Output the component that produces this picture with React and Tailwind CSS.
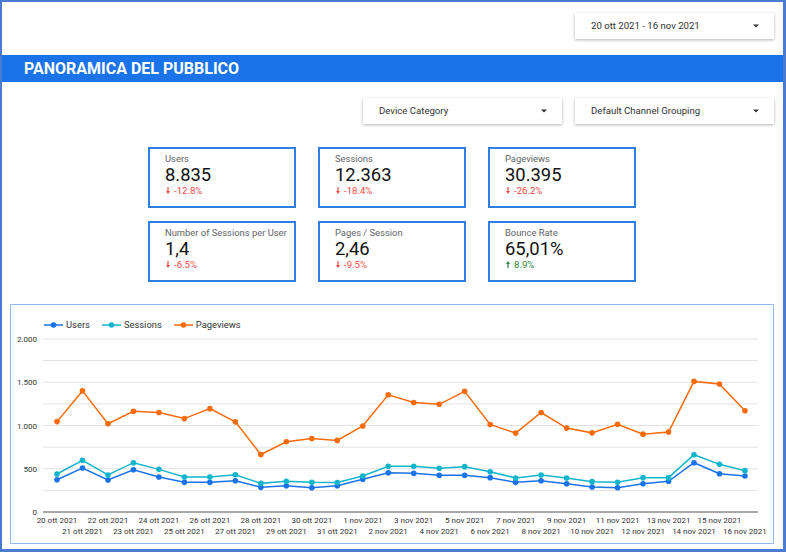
import React from 'react';

const days = [
  '20 ott 2021', '21 ott 2021', '22 ott 2021', '23 ott 2021', '24 ott 2021', '25 ott 2021', '26 ott 2021',
  '27 ott 2021', '28 ott 2021', '29 ott 2021', '30 ott 2021', '31 ott 2021', '1 nov 2021', '2 nov 2021',
  '3 nov 2021', '4 nov 2021', '5 nov 2021', '6 nov 2021', '7 nov 2021', '8 nov 2021', '9 nov 2021',
  '10 nov 2021', '11 nov 2021', '12 nov 2021', '13 nov 2021', '14 nov 2021', '15 nov 2021', '16 nov 2021',
];

const pageviews = [1045, 1400, 1020, 1165, 1150, 1080, 1195, 1042, 665, 812, 850, 828, 995, 1355, 1265, 1245, 1395, 1012, 912, 1150, 970, 915, 1015, 900, 925, 1510, 1480, 1170];
const sessions = [439, 598, 428, 570, 493, 405, 405, 431, 331, 355, 343, 340, 416, 528, 528, 505, 524, 466, 393, 428, 393, 351, 343, 397, 397, 662, 551, 478];
const users = [373, 509, 370, 489, 405, 343, 343, 362, 285, 304, 281, 304, 378, 454, 447, 424, 424, 397, 343, 362, 327, 289, 281, 327, 355, 570, 443, 416];

const series = [
  { name: 'Users', color: '#1a73e8', data: users },
  { name: 'Sessions', color: '#12b5cb', data: sessions },
  { name: 'Pageviews', color: '#f76b0d', data: pageviews },
];

const cards = [
  { label: 'Users', value: '8.835', delta: '-12.8%', up: false },
  { label: 'Sessions', value: '12.363', delta: '-18.4%', up: false },
  { label: 'Pageviews', value: '30.395', delta: '-26.2%', up: false },
  { label: 'Number of Sessions per User', value: '1,4', delta: '-6.5%', up: false },
  { label: 'Pages / Session', value: '2,46', delta: '-9.5%', up: false },
  { label: 'Bounce Rate', value: '65,01%', delta: '8.9%', up: true },
];

const yTicks = [
  { v: 0, label: '0' },
  { v: 500, label: '500' },
  { v: 1000, label: '1.000' },
  { v: 1500, label: '1.500' },
  { v: 2000, label: '2.000' },
];

const px = (i) => 57 + i * 25.48;
const py = (v) => 513 - v * 0.0865;

function Caret() {
  return (
    <svg width="6" height="4" viewBox="0 0 6 4">
      <path d="M0 0.5h6L3 3.5z" fill="#333" />
    </svg>
  );
}

function Dropdown({ text, className = '' }) {
  return (
    <div className={`w-[199px] h-[26px] bg-white flex items-center justify-between pl-4 pr-[15px] shadow-[0_1px_3px_rgba(0,0,0,0.3)] ${className}`}>
      <span className="text-[9.6px] text-[#333]">{text}</span>
      <Caret />
    </div>
  );
}

function Arrow({ up }) {
  return (
    <svg width="4" height="7" viewBox="0 0 4 7" className="mr-[4px] ml-[1px]">
      {up ? (
        <path d="M2 0L4 3H2.6V7H1.4V3H0z" fill="currentColor" />
      ) : (
        <path d="M2 7L4 4H2.6V0H1.4V4H0z" fill="currentColor" />
      )}
    </svg>
  );
}

function Chart() {
  const grid = [250, 500, 750, 1000, 1250, 1500, 1750, 2000];
  return (
    <svg width="762" height="213" viewBox="11 331 762 213" className="block">
      {grid.map((g) => (
        <line key={g} x1="43" x2="758" y1={py(g)} y2={py(g)} stroke="#e2e2e2" strokeWidth="1" />
      ))}
      <line x1="43" x2="758" y1="513" y2="513" stroke="#a8a8a8" strokeWidth="2" />
      {yTicks.map((t) => (
        <text key={t.v} x="37" y={py(t.v) + 3} textAnchor="end" fontSize="8" fill="#333">
          {t.label}
        </text>
      ))}
      {days.map((d, i) => (
        <text key={d} x={px(i)} y={i % 2 === 0 ? 524 : 534.5} textAnchor="middle" fontSize="8" fill="#333">
          {d}
        </text>
      ))}
      {series.map((s) => (
        <g key={s.name}>
          <polyline
            points={s.data.map((v, i) => `${px(i)},${py(v)}`).join(' ')}
            fill="none"
            stroke={s.color}
            strokeWidth="1.5"
          />
          {s.data.map((v, i) => (
            <circle key={i} cx={px(i)} cy={py(v)} r="2.8" fill={s.color} />
          ))}
        </g>
      ))}
    </svg>
  );
}

export default function App() {
  return (
    <div className="w-[786px] h-[552px] bg-white border-l-2 border-t-2 border-r-[3px] border-b-[3px] border-[#4a7bd0] font-['Roboto',sans-serif] flex flex-col overflow-hidden">
      <div className="h-[53px] flex justify-end items-start pt-[11px] pr-[9px]">
        <Dropdown text="20 ott 2021 - 16 nov 2021" className="h-[25px]" />
      </div>

      <div className="h-[27px] bg-[#1a73e8] flex items-center pl-[22px]">
        <h1 className="text-white font-bold text-[16px] leading-none">PANORAMICA DEL PUBBLICO</h1>
      </div>

      <div className="flex justify-end gap-[13px] pr-[9px] mt-4">
        <Dropdown text="Device Category" />
        <Dropdown text="Default Channel Grouping" />
      </div>

      <div className="grid grid-cols-[148px_148px_148px] gap-x-[22px] gap-y-[13px] ml-[146px] mt-[23px]">
        {cards.map((c) => (
          <div key={c.label} className="h-[61px] border-2 border-[#2f7ee3] pl-[15px] pt-[4px]">
            <div className="text-[9.4px] leading-[11px] text-[#5f6368]">{c.label}</div>
            <div className="text-[18.4px] leading-[21px] text-[#111]">{c.value}</div>
            <div className={`flex items-center text-[9.6px] leading-[11px] ${c.up ? 'text-[#2e8540]' : 'text-[#ef4a45]'}`}>
              <Arrow up={c.up} />
              <span>{c.delta}</span>
            </div>
          </div>
        ))}
      </div>

      <div className="ml-2 mt-[22px] w-[764px] h-[240px] border border-[#93b9f2]">
        <div className="flex items-center pl-[33px] pt-[15px] h-[25px] text-[9.4px] text-[#333]">
          {series.map((s) => (
            <div key={s.name} className="flex items-center mr-[12px]">
              <svg width="19" height="6" viewBox="0 0 19 6" className="mr-[3px]">
                <line x1="0" x2="19" y1="3" y2="3" stroke={s.color} strokeWidth="1.5" />
                <circle cx="9.5" cy="3" r="2.8" fill={s.color} />
              </svg>
              <span>{s.name}</span>
            </div>
          ))}
        </div>
        <Chart />
      </div>
    </div>
  );
}
